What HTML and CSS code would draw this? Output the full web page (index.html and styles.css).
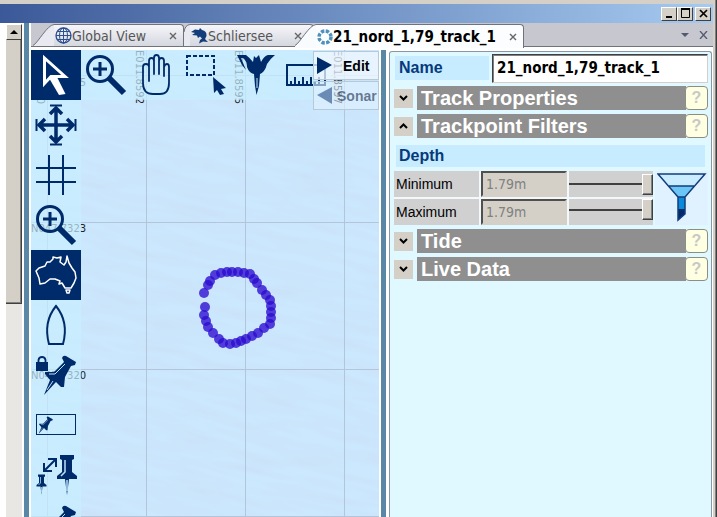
FILE: index.html
```html
<!DOCTYPE html>
<html lang="en">
<head>
<meta charset="utf-8">
<title>Track editor</title>
<link rel="stylesheet" href="styles.css">
</head>
<body>
<svg class="defs" aria-hidden="true">
  <symbol id="magnifier" viewBox="0 0 50 50">
    <circle cx="19" cy="19" r="12.500" fill="none" stroke="#002b6b" stroke-width="3"/>
    <path d="M19 12V26M12 19H26" stroke="#002b6b" stroke-width="3"/>
    <path d="M28 28L43 43" stroke="#002b6b" stroke-width="6"/>
  </symbol>
  <symbol id="pin" viewBox="0 0 50 50">
    <path d="M13 45L19 30L14 24V22L23 22L33 12L31 8Q32 5 35 6L45 12L44 15L40 16L34 27L33 37L30 37L25 32Z" fill="#002b6b"/>
    <path d="M18 24L24 24L34 14M22 31L16 40" fill="none" stroke="#b9e2fb" stroke-width="1"/>
  </symbol>
  <symbol id="pin-up" viewBox="0 0 22 40">
    <path d="M4 0H18V4L16 5V17L21 21V24H13L11 40L9 24H1V21L6 17V5L4 4Z" fill="#002b6b"/>
    <path d="M9 5V17L5 21M11 25V36" fill="none" stroke="#b9e2fb" stroke-width="1.500"/>
  </symbol>
</svg>
<div class="window">
  <header class="titlebar">
    <button class="winbtn" aria-label="Minimize"><svg width="13" height="11"><path d="M3 9H9" stroke="#000" stroke-width="2"/></svg></button>
    <button class="winbtn" aria-label="Maximize"><svg width="13" height="11"><path d="M2 1H11" stroke="#000" stroke-width="2"/><path d="M2.500 1V9.500H10.500V1" fill="none" stroke="#000"/></svg></button>
    <button class="winbtn close" aria-label="Close"><svg width="13" height="11"><path d="M3 2L10 9M10 2L3 9" stroke="#000" stroke-width="1.700"/></svg></button>
  </header>
  <div class="workspace">
    <div class="scroller">
      <button class="scroll-up" aria-label="Scroll up"><svg width="8" height="4"><path d="M0 4L4 0L8 4Z"/></svg></button>
      <div class="scroll-thumb"></div>
    </div>
    <div class="splitter"></div>
    <main class="editor">
      <nav class="tabs">
        <div class="tab first">
          <svg class="slant" width="21" height="22"><path d="M0 22C5 19 14 1 21 0.500V22Z" fill="#e9eaf1"/><path d="M0 21.500C5 19 14 1 21 0.500" fill="none" stroke="#70737c"/></svg>
          <div class="tab-body">
            <svg width="17" height="17" viewBox="0 0 17 17" fill="none" stroke="#2c4f91"><circle cx="8.500" cy="8.500" r="7.500" stroke-width="1.300"/><ellipse cx="8.500" cy="8.500" rx="4" ry="7.500"/><path d="M8.500 1V16M1 8.500H16M2.500 4.500H14.500M2.500 12.500H14.500"/></svg>
            <a href="#global">Global View</a>
            <button class="tab-close" aria-label="Close Global View"><svg width="8" height="8"><path d="M1 1L7 7M7 1L1 7" stroke="#666" stroke-width="1.400"/></svg></button>
          </div>
        </div>
        <div class="tab second">
          <svg class="slant" width="6" height="22"><path d="M0 22V8Q1 1 6 0.500V22Z" fill="#e9eaf1"/><path d="M0 8Q1 1 6 0.500" fill="none" stroke="#70737c"/></svg>
          <div class="tab-body">
            <svg width="17" height="16" viewBox="0 0 17 16"><path d="M0 4L4 1.500L8 2L9 0L11 2Q16 3 15.500 8L14 11L17 14L12 13.500L8 15.500L9 12L11 10.500L9 8.500L7 10L6 7.500L1 7L4 5Z" fill="#123c7c"/></svg>
            <a href="#schliersee">Schliersee</a>
            <button class="tab-close" aria-label="Close Schliersee"><svg width="8" height="8"><path d="M1 1L7 7M7 1L1 7" stroke="#666" stroke-width="1.400"/></svg></button>
          </div>
        </div>
        <div class="tab active">
          <svg class="slant" width="21" height="24"><path d="M0 24V22C5 19 14 1 21 0.500V24Z" fill="#f8fcfe"/><path d="M0 21.500C5 19 14 1 21 0.500" fill="none" stroke="#70737c"/></svg>
          <div class="tab-body">
            <svg width="16" height="16" viewBox="0 0 16 16"><circle cx="8" cy="8" r="6" fill="none" stroke="#4f91b9" stroke-width="3.500" stroke-dasharray="3.300 1.412"/></svg>
            <a href="#track">21_nord_1,79_track_1</a>
            <button class="tab-close" aria-label="Close track"><svg width="8" height="8"><path d="M1 1L7 7M7 1L1 7" stroke="#666" stroke-width="1.400"/></svg></button>
          </div>
        </div>
        <div class="tab-tools">
          <button aria-label="List tabs"><svg width="8" height="4"><path d="M0 0H8L4 4Z" fill="#555970"/></svg></button>
          <button aria-label="Close pane"><svg width="9" height="8"><path d="M1 0L8 8M8 0L1 8" stroke="#555970" stroke-width="1.300"/></svg></button>
        </div>
      </nav>
      <div class="panes">
        <section class="map" aria-label="Map">
          <svg class="chart" width="100%" height="100%">
            <defs>
              <filter id="waves" x="0" y="0" width="100%" height="100%">
                <feTurbulence type="fractalNoise" baseFrequency="0.018 0.110" numOctaves="2" seed="7"/>
                <feColorMatrix values="0 0 0 0 0.600  0 0 0 0 0.740  0 0 0 0 0.920  1.300 0 0 0 -0.450"/>
              </filter>
            </defs>
            <rect width="100%" height="100%" fill="#cbe8fe"/>
            <rect x="-100" y="-200" width="800" height="1000" filter="url(#waves)" transform="rotate(12)"/>
            <path d="M16.500 0V2000M115.500 0V2000M214.500 0V2000M313.500 0V2000M0 25.500H2000M0 172.500H2000M0 319.500H2000M0 466.500H2000" stroke="#b3c5d8"/>
            <g class="coords">
              <text x="0" y="36">N047.7325</text>
              <text x="0" y="182">N047.7323</text>
              <text x="0" y="329">N047.7320</text>
              <text transform="translate(6 0) rotate(90)">E011.8590</text>
              <text transform="translate(105 0) rotate(90)">E011.8592</text>
              <text transform="translate(204 0) rotate(90)">E011.8595</text>
              <text transform="translate(303 0) rotate(90)">E011.8597</text>
            </g>
            <g fill="#2b0bd0" fill-opacity="0.780">
              <circle cx="173" cy="243" r="5"/><circle cx="177" cy="235" r="5"/><circle cx="179" cy="231" r="5"/><circle cx="184" cy="225" r="5"/><circle cx="190" cy="223" r="5"/><circle cx="196" cy="222" r="5"/><circle cx="201" cy="222" r="5"/><circle cx="207" cy="222" r="5"/><circle cx="213" cy="223" r="5"/><circle cx="219" cy="224" r="5"/><circle cx="223" cy="229" r="5"/><circle cx="226" cy="233" r="5"/><circle cx="231" cy="240" r="5"/><circle cx="235" cy="245" r="5"/><circle cx="239" cy="250" r="5"/><circle cx="240" cy="256" r="5"/><circle cx="240" cy="262" r="5"/><circle cx="240" cy="268" r="5"/><circle cx="239" cy="274" r="5"/><circle cx="233" cy="278" r="5"/><circle cx="227" cy="283" r="5"/><circle cx="221" cy="286" r="5"/><circle cx="215" cy="289" r="5"/><circle cx="210" cy="291" r="5"/><circle cx="205" cy="293" r="5"/><circle cx="199" cy="294" r="5"/><circle cx="192" cy="293" r="5"/><circle cx="188" cy="289" r="5"/><circle cx="182" cy="283" r="5"/><circle cx="177" cy="277" r="5"/><circle cx="175" cy="271" r="5"/><circle cx="173" cy="265" r="5"/><circle cx="174" cy="257" r="5"/>
            </g>
          </svg>
          <div class="toolbar top">
            <button class="tool on" aria-label="Select"><svg viewBox="0 0 50 50"><path d="M13.500 8V33.500L20 26.500H34Z" fill="#002b6b" stroke="#fff" stroke-width="3"/><path d="M18 28L25 25L34.500 44L28 45Z" fill="#fff"/></svg></button>
            <button class="tool" aria-label="Zoom"><svg><use href="#magnifier"/></svg></button>
            <button class="tool" aria-label="Pan"><svg viewBox="0 0 50 50" fill="none" stroke="#002b6b" stroke-width="1.800" stroke-linecap="round"><path d="M18 31V17Q18 14 15 14T12 17V33Q12 44 22 44H29Q38 44 38 33V17Q38 14 36 14T33 17V26M18 24V11Q18 8 20.500 8T23 11V24M23 11V8Q23 5 25.500 5T28 8V24M28 11Q28 8 30.500 8T33 11V26"/></svg></button>
            <button class="tool" aria-label="Select area"><svg viewBox="0 0 50 50"><rect x="6" y="6" width="27" height="19" fill="none" stroke="#002b6b" stroke-width="2" stroke-dasharray="4 2"/><path d="M32 27L45 38L40 39L43 44L39 45L36 40L33 43Z" fill="#002b6b"/></svg></button>
            <button class="tool" aria-label="Dive site"><svg viewBox="0 0 50 50"><path d="M6 5H15Q19 8 22 12L23 6L25 8L28 5L30 12Q33 6 37 5H44Q39 9 36 14Q34 22 29 24L28 36L25.500 45L24 36L23 24Q18 23 16 17Q16 11 12 8H10L15 20L11 15Z" fill="#002b6b"/><path d="M26 28V38" stroke="#c9ecff" stroke-width="1"/></svg></button>
            <button class="tool" aria-label="Measure"><svg viewBox="0 0 50 50"><path d="M6 15H44V35H6ZM10 35V31M14 35V27M18 35V31M22 35V27M26 35V31M30 35V27M34 35V31M38 35V27" fill="none" stroke="#002b6b" stroke-width="2"/></svg></button>
          </div>
          <div class="toolbar side">
            <button class="tool" aria-label="Fit"><svg viewBox="0 0 50 50" fill="none" stroke="#002b6b" stroke-width="3.500"><path d="M8 25H42M25 8V42M14 19L8 25L14 31M36 19L42 25L36 31M19 14L25 8L31 14M19 36L25 42L31 36"/><path d="M5.500 19V31M44.500 19V31M19 5.500H31M19 44.500H31" stroke-width="2"/></svg></button>
            <button class="tool" aria-label="Grid"><svg viewBox="0 0 50 50"><path d="M18 5V45M32 5V45M5 18H45M5 32H45" stroke="#002b6b" stroke-width="2"/></svg></button>
            <button class="tool" aria-label="Zoom in"><svg><use href="#magnifier"/></svg></button>
            <button class="tool on" aria-label="Land"><svg viewBox="0 0 50 50" fill="none" stroke="#fff" stroke-width="1.500" stroke-linejoin="round"><path d="M5 21L8 18L14 16L16 12L19 12L22 9L22 7L26 8L30 7L29 12L33 15L35 12L36 6L38 13L41 18L44 22L45 28L43 33L40 38L34 38L31 33L28 34L29 31L24 29L19 29L14 33L9 34L8 28Z"/><path d="M35 40L39 40L38 43H36Z"/></svg></button>
            <button class="tool" aria-label="Vessel"><svg viewBox="0 0 50 50"><path d="M25 6Q12 22 18 44H32Q38 22 25 6Z" fill="none" stroke="#002b6b" stroke-width="2"/></svg></button>
            <button class="tool" aria-label="Lock waypoints"><svg viewBox="0 0 50 50"><path d="M5 12H17V21H5Z" fill="#002b6b"/><path d="M7.500 13V10Q8 7 11 7T14.500 10V13" fill="none" stroke="#002b6b" stroke-width="1.800"/><use href="#pin" width="50" height="50"/></svg></button>
            <button class="tool" aria-label="Waypoint labels"><svg viewBox="0 0 50 50"><rect x="5.500" y="14.500" width="39" height="20" fill="none" stroke="#002b6b"/><use href="#pin" x="2" y="14" width="22" height="22"/></svg></button>
            <button class="tool" aria-label="Waypoint size"><svg viewBox="0 0 50 50"><use href="#pin-up" x="25" y="5" width="22" height="40"/><use href="#pin-up" x="5" y="24" width="11" height="21"/><path d="M14 20L24 10M17 9H25V17M13 13V21H21" fill="none" stroke="#002b6b" stroke-width="2"/></svg></button>
            <button class="tool" aria-label="Waypoints"><svg><use href="#pin"/></svg></button>
          </div>
          <div class="modes">
            <button class="mode"><svg width="15" height="17"><path d="M0 0L15 8L0 17Z" fill="#002b6b"/></svg>Edit</button>
            <button class="mode off"><svg width="15" height="17"><path d="M15 0L0 8L15 17Z" fill="#002b6b"/></svg>Sonar</button>
          </div>
        </section>
        <div class="splitter"></div>
        <aside class="panel">
          <div class="name-row">
            <label class="caption" for="name">Name</label>
            <input class="name-input" id="name" type="text" value="21_nord_1,79_track_1">
          </div>
          <div class="section">
            <button class="toggle" aria-label="Expand Track Properties"><svg width="9" height="6"><path d="M1 1L4.500 4.500L8 1" fill="none" stroke="#000" stroke-width="2"/></svg></button>
            <h2>Track Properties</h2><button class="help" aria-label="Track Properties help">?</button>
          </div>
          <div class="section">
            <button class="toggle" aria-label="Collapse Trackpoint Filters"><svg width="9" height="6"><path d="M1 5L4.500 1.500L8 5" fill="none" stroke="#000" stroke-width="2"/></svg></button>
            <h2>Trackpoint Filters</h2><button class="help" aria-label="Trackpoint Filters help">?</button>
          </div>
          <h3 class="caption depth">Depth</h3>
          <div class="filters">
            <div class="fields">
              <div class="field"><label for="min">Minimum</label><input id="min" type="text" value="1.79m" disabled><div class="slot"><input type="range" aria-label="Minimum depth" value="100" disabled></div></div>
              <div class="field"><label for="max">Maximum</label><input id="max" type="text" value="1.79m" disabled><div class="slot"><input type="range" aria-label="Maximum depth" value="100" disabled></div></div>
            </div>
            <button class="funnel" aria-label="Apply filter"><svg width="50" height="50" viewBox="0 0 50 50"><path d="M1 2H48L37 14H12Z" fill="#c9ecff"/><path d="M12 14H37L28 25H21Z" fill="#6bc5f5"/><path d="M21 25H28V37H21Z" fill="#0a8ad8"/><path d="M21 37H28V42L21 48Z" fill="#002b6b"/><path d="M1 2H48L28 25V42L21 48V25ZM12 14H37M21 25H28" fill="none" stroke="#123c7c" stroke-width="1.500"/></svg></button>
          </div>
          <div class="section">
            <button class="toggle" aria-label="Expand Tide"><svg width="9" height="6"><path d="M1 1L4.500 4.500L8 1" fill="none" stroke="#000" stroke-width="2"/></svg></button>
            <h2>Tide</h2><button class="help" aria-label="Tide help">?</button>
          </div>
          <div class="section">
            <button class="toggle" aria-label="Expand Live Data"><svg width="9" height="6"><path d="M1 1L4.500 4.500L8 1" fill="none" stroke="#000" stroke-width="2"/></svg></button>
            <h2>Live Data</h2><button class="help" aria-label="Live Data help">?</button>
          </div>
        </aside>
      </div>
    </main>
  </div>
</div>
</body>
</html>
```
FILE: styles.css
```css
* { box-sizing: border-box; }
body { margin: 0; font-family: "Liberation Sans", sans-serif; overflow: hidden; }
button { margin: 0; padding: 0; border: 0; background: none; font: inherit; display: flex; align-items: center; justify-content: center; }
input { font: inherit; margin: 0; min-width: 0; }
.defs { position: absolute; width: 0; height: 0; }

.window { display: flex; flex-direction: column; height: 100vh; background: #d4d0c8; border-right: 1px solid #404040; box-shadow: inset -1px 0 #808080; padding: 4px 3px 0 0; }
.titlebar { display: flex; justify-content: flex-end; align-items: center; height: 19px; padding-right: 2px; background: linear-gradient(90deg, #3b5998, #a6caf0); flex: none; }
.winbtn { width: 16px; height: 14px; background: #d4d0c8; border: 1px solid; border-color: #fff #404040 #404040 #fff; }
.winbtn.close { margin-left: 2px; }

.workspace { display: flex; flex: 1; min-height: 0; background: #fff; }
.scroller { display: flex; flex-direction: column; width: 24px; padding: 1px 2px 0 6px; flex: none; }
.scroller::after { content: ""; flex: 1; background: #e9e7e3; }
.scroll-up { height: 16px; background: #d4d0c8; border: 1px solid; border-color: #fff #404040 #404040 #fff; }
.scroll-thumb { height: 51vh; background: #d4d0c8; border: solid #404040; border-width: 0 1px 1px 0; box-shadow: inset -1px -1px #808080; }
.splitter { width: 5px; background: #5a87a5; flex: none; }
.editor { display: flex; flex-direction: column; flex: 1; min-width: 0; }

.tabs { display: flex; align-items: flex-end; height: 24px; background: #c6c7cf; border-bottom: 1px solid #70737c; margin-left: 2px; flex: none; }
.tab { display: flex; height: 22px; flex: none; }
.slant { flex: none; }
.tab-body { display: flex; align-items: center; border: solid #70737c; border-width: 1px 1px 0 0; border-radius: 0 4px 0 0; background: linear-gradient(#f6f6fa, #d5d7df); font: 14px "DejaVu Sans Condensed", "DejaVu Sans", sans-serif; padding: 0 6px 0 1px; }
.tab-body a { color: #555; text-decoration: none; white-space: nowrap; }
.tab-body svg { flex: none; }
.tab.first { margin-left: 2px; }
.tab-close { margin-left: auto; }
.first .tab-body { width: 130px; }
.second .tab-body { width: 124px; margin-right: -19px; padding-right: 11px; }
.tab.active { height: 24px; align-items: flex-start; position: relative; margin-bottom: -2px; }
.active .tab-body { width: 208px; height: 24px; background: #fbfdff; font-weight: bold; font-size: 15px; }
.active a { color: #000; }
.tab-tools { display: flex; gap: 10px; margin-left: auto; height: 22px; padding-right: 5px; }

.panes { display: flex; flex: 1; min-height: 0; padding-top: 3px; background: #fff; }
.map { position: relative; flex: 1; min-width: 0; margin: 0 2px; overflow: hidden; }
.panes > .splitter { margin-right: 3px; }
.chart { display: block; }
.coords { font: 10px "DejaVu Sans", sans-serif; fill: #222; }
.toolbar { position: absolute; top: 0; left: 0; display: flex; }
.toolbar.side { top: 50px; flex-direction: column; }
.tool { width: 50px; height: 50px; flex: none; background: rgba(200, 238, 255, 0.700); }
.tool svg { width: 50px; height: 50px; }
.tool.on { background: #002b6b; }
.modes { position: absolute; top: 1px; right: 0; width: 66px; display: flex; flex-direction: column; gap: 1px; }
.mode { height: 29px; width: 100%; justify-content: flex-start; gap: 11px; padding-left: 3px; background: rgba(240, 248, 255, 0.750); border: 1px solid #b5c9d6; font-size: 14px; font-weight: bold; color: #000; }
.mode.off { gap: 5px; color: rgba(20, 40, 70, 0.600); background: rgba(225, 242, 255, 0.600); }
.mode.off svg { opacity: 0.500; }

.panel { width: 323px; flex: none; background: #e0f8ff; border: 1px solid #8a97a3; border-bottom: 0; border-radius: 3px 3px 0 0; padding: 2px 3px 0 4px; margin: 1px 1px 0 0; display: flex; flex-direction: column; gap: 4px; }
.caption { background: #c8ecff; color: #063a7a; font-size: 16px; font-weight: bold; }
.name-row { display: flex; align-items: center; gap: 3px; height: 28px; padding-left: 1px; }
.name-row .caption { width: 94px; height: 24px; line-height: 24px; padding-left: 4px; }
.name-input { flex: 1; height: 29px; border: 1px solid; border-color: #404040 #d4d0c8 #d4d0c8 #404040; box-shadow: inset 1px 1px #808080; background: #fff; font: bold 15px "DejaVu Sans Condensed", "DejaVu Sans", sans-serif; padding: 1px 4px; }
.section { display: flex; align-items: center; height: 24px; }
.toggle { width: 19px; height: 19px; background: #d4d0c8; margin-right: 4px; }
.section h2 { flex: 1; margin: 0; height: 24px; line-height: 24px; padding-left: 4px; background: #8f8f8f; color: #fff; font-size: 20px; }
.help { width: 23px; height: 24px; background: #ffffe1; border: 1px solid #8b8e84; border-radius: 4px; color: #c8c8c8; font-size: 16px; font-weight: bold; margin-left: -1px; }
.depth { margin: 3px 3px 0 2px; height: 22px; line-height: 22px; padding-left: 3px; }
.filters { display: flex; gap: 2px; }
.fields { display: flex; flex-direction: column; gap: 2px; flex: 1; background: #f3f8fa; }
.field { display: flex; height: 26px; gap: 2px; }
.field label { width: 85px; padding-left: 2px; line-height: 26px; font-size: 14px; background: #d0d0d0; color: #000; }
.field input[type="text"] { width: 86px; border: 2px solid; border-color: #505050 #d4d0c8 #d4d0c8 #505050; background: #d4d0c8; color: #808080; font: 14px "DejaVu Sans Condensed", "DejaVu Sans", sans-serif; padding: 0 3px; }
.slot { flex: 1; display: flex; align-items: center; background: #d0d0d0; min-width: 0; }
.field:last-child .slot { align-items: flex-start; }
.field input[type="range"] { appearance: none; width: 100%; height: 21px; background: linear-gradient(#404040, #404040) center / 100% 2px no-repeat; }
.field input[type="range"]::-webkit-slider-thumb { appearance: none; width: 11px; height: 21px; background: #d4d0c8; border: 1px solid; border-color: #fff #404040 #404040 #fff; box-shadow: inset -1px -1px #808080; }
.funnel { width: 53px; background: #e0f2ff; align-items: flex-start; padding-top: 1px; }
```
